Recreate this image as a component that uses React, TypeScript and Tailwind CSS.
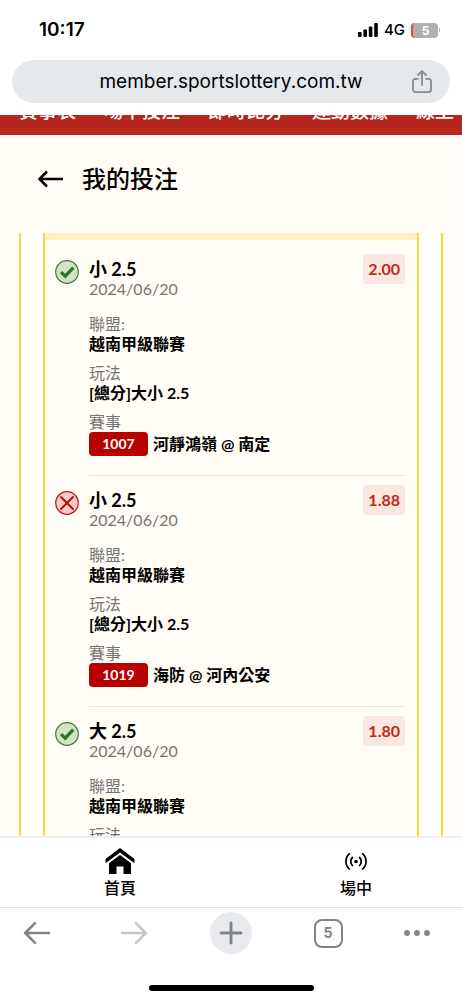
import React from 'react';

interface Bet {
  id: number;
  pick: string;
  date: string;
  league: string;
  market: string;
  code: string;
  match: string;
  odds: string;
  won: boolean;
}

const NAV_LINKS = ['賽事表', '場中投注', '即時比分', '運動數據', '線上'];

const BETS: Bet[] = [
  { id: 1, pick: '小 2.5', date: '2024/06/20', league: '越南甲級聯賽', market: '[總分]大小 2.5', code: '1007', match: '河靜鴻嶺 @ 南定', odds: '2.00', won: true },
  { id: 2, pick: '小 2.5', date: '2024/06/20', league: '越南甲級聯賽', market: '[總分]大小 2.5', code: '1019', match: '海防 @ 河內公安', odds: '1.88', won: false },
  { id: 3, pick: '大 2.5', date: '2024/06/20', league: '越南甲級聯賽', market: '', code: '', match: '', odds: '1.80', won: true },
];

const App: React.FC = () => {
  return (
    <div className="h-screen flex flex-col overflow-hidden bg-white text-black font-['Lato','Noto_Sans_CJK_TC',sans-serif]">
      <StatusBar />
      <AddressBar />

      <nav className="shrink-0 h-5 overflow-hidden bg-[#b5271c] flex items-end gap-7 pl-[19px] pb-[14px]">
        {NAV_LINKS.map(label => (
          <a key={label} href="#" className="shrink-0 text-[19px] leading-5 font-medium text-white whitespace-nowrap">{label}</a>
        ))}
      </nav>

      <main className="flex-1 min-h-0 flex flex-col bg-[#fffdf5]">
        <header className="shrink-0 flex items-center gap-[18px] px-[37px] pt-6 pb-[34px]">
          <button aria-label="返回">
            <BackIcon />
          </button>
          <h1 className="text-2xl leading-10 font-medium">我的投注</h1>
        </header>

        <div className="flex-1 min-h-0 overflow-hidden mx-[19px] bg-white border-x-2 border-[#fdd835] px-[22px]">
          <section className="border-x-2 border-[#fdd835] bg-[#fffdf5]">
            <div className="h-[7px] bg-[#fff1c4]" />
            <div className="-mt-[9px] pt-[14px]">
              {BETS.map(bet => <BetRow key={bet.id} bet={bet} />)}
            </div>
          </section>
        </div>
      </main>

      <BottomNav />
      <BrowserToolbar />
    </div>
  );
};

const StatusBar = () => (
  <div className="shrink-0 h-[60px] flex items-center justify-between pl-[39px] pr-[22px] font-['Inter',sans-serif]">
    <span className="text-[19px] leading-6 font-semibold">10:17</span>
    <div className="flex items-center">
      <svg className="w-5 h-[14px]" viewBox="0 0 20 14" fill="currentColor">
        <rect x="0" y="9" width="3.6" height="5" rx="1" />
        <rect x="5.4" y="6.6" width="3.6" height="7.4" rx="1" />
        <rect x="10.8" y="3.6" width="3.6" height="10.4" rx="1" />
        <rect x="16.2" y="0" width="3.6" height="14" rx="1" />
      </svg>
      <span className="ml-[6px] text-[15px] leading-5 font-medium">4G</span>
      <div className="ml-[6px] w-[27px] h-[15px] rounded bg-[#b0b0b0] border-l-2 border-[#ff3b30] flex items-center justify-center">
        <span className="text-xs leading-[15px] font-bold text-white">5</span>
      </div>
      <div className="ml-px w-px h-1 rounded-r bg-[#b0b0b0]" />
    </div>
  </div>
);

const AddressBar = () => (
  <div className="shrink-0 px-3 pb-3">
    <div className="h-[43px] rounded-full bg-[#e6e9ec] flex items-center px-[17px]">
      <div className="w-[22px]" />
      <input
        aria-label="網址"
        readOnly
        value="member.sportslottery.com.tw"
        className="flex-1 min-w-0 bg-transparent text-center text-[19px] leading-6 outline-none font-['Inter',sans-serif]"
      />
      <button aria-label="分享" className="text-[#868b90]">
        <svg className="w-[22px] h-6" viewBox="0 0 22 24" fill="none" stroke="currentColor" strokeWidth="1.8" strokeLinecap="round" strokeLinejoin="round">
          <path d="M7 8.8H4.6a2.6 2.6 0 00-2.6 2.6v8.2a2.6 2.6 0 002.6 2.6h12.8a2.6 2.6 0 002.6-2.6v-8.2a2.6 2.6 0 00-2.6-2.6H15" />
          <path d="M11 15V1.5M7 5l4-3.8L15 5" />
        </svg>
      </button>
    </div>
  </div>
);

const BetRow: React.FC<{ bet: Bet }> = ({ bet }) => (
  <article className="flex gap-[10px] pl-[10px] pr-3">
    <div className="shrink-0 pt-[15px]">
      {bet.won ? <WonIcon /> : <LostIcon />}
    </div>
    <div className="flex-1 min-w-0 border-b border-[#e8e6e0] pt-[14px] pb-[19px]">
      <div className="flex justify-between items-start">
        <div>
          <h2 className="text-lg leading-5 font-bold">{bet.pick}</h2>
          <p className="text-base leading-5 text-[#757575]">{bet.date}</p>
        </div>
        <span className="-mt-[5px] h-[30px] px-[5px] rounded bg-[#f9e7e0] text-base leading-[30px] font-bold text-[#bf2a20]">{bet.odds}</span>
      </div>
      <dl className="mt-[15px] text-base">
        <dt className="leading-5 text-[#757575]">聯盟:</dt>
        <dd className="leading-5 font-bold">{bet.league}</dd>
        <dt className="mt-[9px] leading-5 text-[#757575]">玩法</dt>
        {bet.market && (
          <>
            <dd className="leading-5 font-bold">{bet.market}</dd>
            <dt className="mt-[9px] leading-5 text-[#757575]">賽事</dt>
            <dd className="h-6 flex items-center gap-[5px] font-bold">
              <span className="w-[59px] h-6 rounded-sm bg-[#b80000] text-sm text-white text-center leading-6">{bet.code}</span>
              <span>{bet.match}</span>
            </dd>
          </>
        )}
      </dl>
    </div>
  </article>
);

const BottomNav = () => (
  <nav className="shrink-0 h-[71px] bg-white border-t-2 border-[#eeeeee] flex justify-between pl-[104px] pr-[90px] pt-[9px]">
    <a href="#" className="flex flex-col items-center">
      <HomeIcon />
      <span className="mt-px text-base leading-6 font-medium">首頁</span>
    </a>
    <a href="#" className="flex flex-col items-center">
      <LiveIcon />
      <span className="mt-px text-base leading-6 font-medium">場中</span>
    </a>
  </nav>
);

const BrowserToolbar = () => (
  <div className="shrink-0 h-[93px] bg-white border-t border-[#e2e3e5] flex flex-col items-center justify-between pt-1 pb-[9px]">
    <div className="w-full flex justify-between px-4 text-[#7c858a]">
      <ToolButton label="上一頁">
        <svg className="w-7 h-6" viewBox="0 0 28 24" fill="none" stroke="currentColor" strokeWidth="2.6" strokeLinecap="round" strokeLinejoin="round">
          <path d="M26 12H2M12 2.2L2.2 12l9.8 9.8" />
        </svg>
      </ToolButton>
      <ToolButton label="下一頁">
        <svg className="w-7 h-6 text-[#c6c7c8]" viewBox="0 0 28 24" fill="none" stroke="currentColor" strokeWidth="2.6" strokeLinecap="round" strokeLinejoin="round">
          <path d="M2 12h24M16 2.2l9.8 9.8-9.8 9.8" />
        </svg>
      </ToolButton>
      <button aria-label="新分頁" className="w-[42px] h-[42px] rounded-full bg-[#e8eaee] flex items-center justify-center">
        <svg className="w-6 h-6" viewBox="0 0 24 24" fill="none" stroke="currentColor" strokeWidth="2.8" strokeLinecap="round">
          <path d="M12 2v20M2 12h20" />
        </svg>
      </button>
      <ToolButton label="分頁">
        <span className="w-[29px] h-[29px] rounded-lg border-2 border-[#7c858a] flex items-center justify-center text-sm leading-5 font-bold font-['Inter',sans-serif]">5</span>
      </ToolButton>
      <button aria-label="更多" className="w-[42px] h-[42px] flex items-center">
        <svg className="w-7 h-2" viewBox="0 0 28 8" fill="currentColor">
          <circle cx="3" cy="4" r="2.9" /><circle cx="13" cy="4" r="2.9" /><circle cx="23" cy="4" r="2.9" />
        </svg>
      </button>
    </div>
    <div className="w-[165px] h-[6px] rounded-full bg-black" />
  </div>
);

const ToolButton: React.FC<{ label: string; children: React.ReactNode }> = ({ label, children }) => (
  <button aria-label={label} className="w-[42px] h-[42px] flex items-center justify-center">{children}</button>
);

const BackIcon = () => (
  <svg className="w-[27px] h-5" viewBox="0 0 27 20" fill="none" stroke="currentColor" strokeWidth="2.6" strokeLinejoin="round">
    <path d="M26 10H3M10 2.5L2.5 10l7.5 7.5" />
  </svg>
);
const WonIcon = () => (
  <svg className="w-6 h-6" viewBox="0 0 24 24" fill="none">
    <circle cx="12" cy="12" r="11.3" fill="#d5e2c9" stroke="#3c8232" strokeWidth="1.2" />
    <path d="M6 12.2l4.2 4L18.3 7.6" stroke="#2f7622" strokeWidth="3.2" />
  </svg>
);
const LostIcon = () => (
  <svg className="w-6 h-6" viewBox="0 0 24 24" fill="none">
    <circle cx="12" cy="12" r="11.3" fill="#f3cbc7" stroke="#bd1515" strokeWidth="1.2" />
    <path d="M6 6l12 12M18 6L6 18" stroke="#b80c0c" strokeWidth="2" strokeLinecap="round" />
  </svg>
);
const HomeIcon = () => (
  <svg className="w-[30px] h-7" viewBox="0 0 30 28" fill="currentColor">
    <path d="M15 1L.5 12v4.2L15 5.4l14.5 10.8V12z" />
    <path d="M15 8L4 16.2V27h7.5v-7.5h7V27H26V16.2z" />
  </svg>
);
const LiveIcon = () => (
  <svg className="w-6 h-7" viewBox="0 0 24 28" fill="none" stroke="currentColor" strokeWidth="1.8">
    <circle cx="12" cy="14.5" r="1.8" fill="currentColor" stroke="none" />
    <path d="M8.8 10a6 6 0 000 9M15.2 10a6 6 0 010 9" />
    <path d="M5.8 6.4a10.5 10.5 0 000 16.2M18.2 6.4a10.5 10.5 0 010 16.2" />
  </svg>
);

export default App;
